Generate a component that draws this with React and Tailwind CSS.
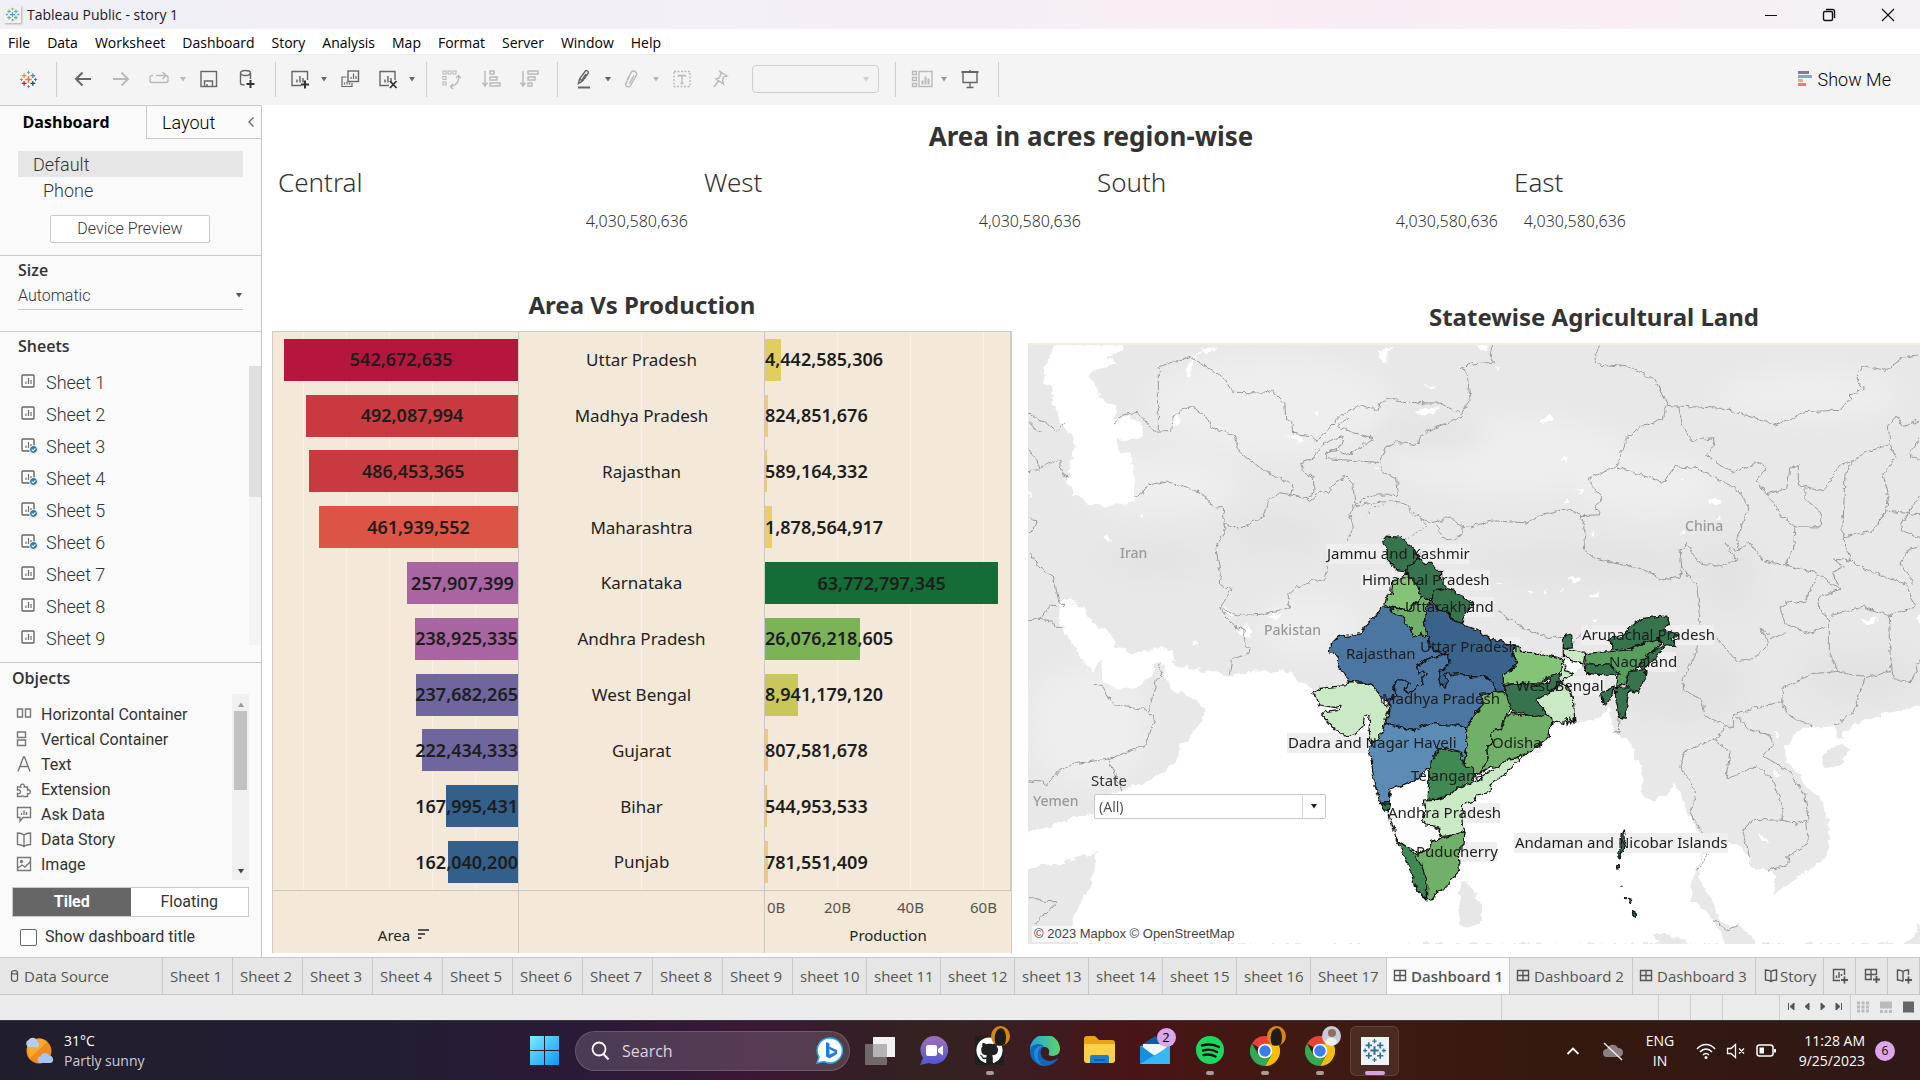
import React from 'react';
import { FaGithub } from 'react-icons/fa';

const UI = "font-['Open_Sans',sans-serif]";
const TB = "font-['Noto_Sans',sans-serif]";

/* ---------- shared small pieces ---------- */

function Svg({ w = 24, h = 24, box, className = '', children }) {
  return (
    <svg width={w} height={h} viewBox={box || `0 0 ${w} ${h}`} fill="none" stroke="currentColor" strokeWidth="1.4" className={`shrink-0 ${className}`} aria-hidden="true">
      {children}
    </svg>
  );
}

function Caret({ className = '' }) {
  return (
    <svg width="8" height="5" viewBox="0 0 8 5" className={`shrink-0 ${className}`} aria-hidden="true">
      <path d="M1 0h6L4 4.500z" fill="currentColor" />
    </svg>
  );
}

const LOGO_MARKS = [
  [12, 12, 4, 2], [12, 3, 2, 1.2], [12, 21, 2, 1.2], [3, 12, 2, 1.2], [21, 12, 2, 1.2],
  [6.500, 7, 3, 1.6], [17.500, 7, 3, 1.6], [6.500, 17, 3, 1.6], [17.500, 17, 3, 1.6],
];
const BRAND = ['#e8762d', '#7099a6', '#7b848f', '#7099a6', '#5b6591', '#eb912c', '#59879b', '#c72035', '#1f447e'];

function TableauMark({ size, mono }) {
  return (
    <svg width={size} height={size} viewBox="0 0 24 24" fill="none" aria-hidden="true">
      {LOGO_MARKS.map(([x, y, r, s], i) => (
        <path key={i} d={`M${x - r} ${y}h${r * 2}M${x} ${y - r}v${r * 2}`} stroke={mono || BRAND[i]} strokeWidth={s} />
      ))}
    </svg>
  );
}

/* ---------- window chrome ---------- */

function TitleBar() {
  return (
    <header className={`flex h-[29px] shrink-0 items-center bg-linear-to-r from-[#f1f0f7] via-[#f9edf6] via-80% to-[#f5f1f7] pl-1 text-[#1a1a1a] ${UI}`}>
      <span className="grid size-[17px] place-items-center bg-[#f3f1ea] shadow-[1px_1px_2px_#aaa]">
        <TableauMark size={15} mono="#5b9cc4" />
      </span>
      <h1 className="ml-1.5 text-[14px]">Tableau Public - story 1</h1>
      <div className="ml-auto flex items-center">
        <button aria-label="Minimize" className="grid h-7 w-[58px] place-items-center">
          <Svg w={12} h={12}><path d="M0 6.500h12" stroke="#111" strokeWidth="1" /></Svg>
        </button>
        <button aria-label="Restore" className="grid h-7 w-[58px] place-items-center">
          <Svg w={14} h={14}><rect x="1.500" y="3.500" width="9" height="9" rx="1.500" stroke="#111" /><path d="M4 1.500h6.500a2 2 0 0 1 2 2V10" stroke="#111" /></Svg>
        </button>
        <button aria-label="Close" className="mr-0.5 grid h-7 w-[60px] place-items-center">
          <Svg w={14} h={14}><path d="M1 1l12 12M13 1L1 13" stroke="#111" strokeWidth="1.200" /></Svg>
        </button>
      </div>
    </header>
  );
}

const MENU = ['File', 'Data', 'Worksheet', 'Dashboard', 'Story', 'Analysis', 'Map', 'Format', 'Server', 'Window', 'Help'];

function MenuBar() {
  return (
    <nav className={`flex h-[25px] shrink-0 items-center gap-[17px] bg-white pt-0.5 pl-2 text-[14px] text-black ${UI}`}>
      {MENU.map((m) => <button key={m} className="leading-5">{m}</button>)}
    </nav>
  );
}

function Sep({ className = '' }) {
  return <span className={`h-[35px] w-px shrink-0 bg-[#cfcfcf] ${className}`} />;
}

function Tool({ label, dim, className = '', children }) {
  return (
    <button aria-label={label} className={`grid size-6 shrink-0 place-items-center ${dim ? 'text-[#b9b9b9]' : 'text-[#666]'} ${className}`}>
      {children}
    </button>
  );
}

const chartBars = <path d="M7 13.500v-3M10 13.500V7M13 13.500V9" strokeWidth="1.500" />;

function Toolbar() {
  return (
    <div className={`flex h-[51px] shrink-0 items-center border-t border-[#ebebeb] bg-[#f4f4f4] pb-0.5 ${TB}`}>
      <Tool label="Start page" className="ml-4"><TableauMark size={19} /></Tool>
      <Sep className="ml-4" />
      <Tool label="Undo" className="ml-3.5"><Svg w={20} h={20}><path d="M18 10H3M9.500 3.500L3 10l6.500 6.500" strokeWidth="2" /></Svg></Tool>
      <Tool label="Redo" dim className="ml-3.5"><Svg w={20} h={20}><path d="M2 10h15M10.500 3.500L17 10l-6.500 6.500" strokeWidth="1.800" /></Svg></Tool>
      <Tool label="Replay" dim className="ml-3.5"><Svg w={20} h={20}><path d="M4 6.500H3a2 2 0 0 0-2 2v3a2 2 0 0 0 2 2h14a2 2 0 0 0 2-2v-3a2 2 0 0 0-2-2H7M13.500 3l3.500 3.500-3.500 3.500" /></Svg></Tool>
      <Caret className="ml-2 text-[#b9b9b9]" />
      <Tool label="Save" className="ml-2.5"><Svg w={20} h={20}><rect x="2" y="2.500" width="15.500" height="15" /><path d="M5.500 17.500V12h8v5.500M8 17.500V15" /></Svg></Tool>
      <Tool label="New data source" className="ml-3.5"><Svg w={20} h={20}><ellipse cx="8.500" cy="4" rx="5" ry="2.500" /><path d="M3.500 4v10c0 1.200 1.500 2 4 2M13.500 4v6" /><path d="M9.500 15h8M13.500 11v8" stroke="#333" strokeWidth="2" /></Svg></Tool>
      <Sep className="ml-4" />
      <Tool label="New worksheet" className="ml-3"><Svg w={20} h={20}><path d="M11 16.500H2v-14h15.500V11" />{chartBars}<path d="M11 15.500h8M15 11.500v8" stroke="#333" strokeWidth="2" /></Svg></Tool>
      <Caret className="ml-2 text-[#666]" />
      <Tool label="Duplicate" className="ml-2.5"><Svg w={20} h={20}><rect x="8" y="2" width="10.500" height="10.500" /><path d="M6.500 8H2v9.500h10V14M11 10V8M13.500 10V4.500M16 10V7M4.500 15.500v-2M7 15.500v-3M9.500 15.500v-2" strokeWidth="1.200" /></Svg></Tool>
      <Tool label="Clear sheet" className="ml-3.5"><Svg w={20} h={20}><path d="M11 16.500H2v-14h15V11" />{chartBars}<path d="M12 12l6.500 7M18.500 12L12 19" stroke="#333" strokeWidth="1.800" /></Svg></Tool>
      <Caret className="ml-2 text-[#666]" />
      <Sep className="ml-2.5" />
      <Tool label="Swap rows and columns" dim className="ml-3"><Svg w={20} h={20}><path d="M2 2h3v3H2zM7 2h3v3H7zM12 2h3v3h-3zM2 7.500h3v3H2zM2 13h3v3H2z" strokeWidth="1.100" /><path d="M17.500 7c1 6-3 10-8 10.500M15 9l2.500-2.500L20 9M12 15l-2.500 2.500L12 20" /></Svg></Tool>
      <Tool label="Sort ascending" dim className="ml-4"><Svg w={20} h={20}><path d="M4 2v14M1.500 13.500L4 17l2.500-3.500M9 2h4v3H9zM9 8h7v3H9zM9 14h10v3H9z" /></Svg></Tool>
      <Tool label="Sort descending" dim className="ml-3.5"><Svg w={20} h={20}><path d="M4 2v14M1.500 13.500L4 17l2.500-3.500M9 2h10v3H9zM9 8h7v3H9zM9 14h4v3H9z" /></Svg></Tool>
      <Sep className="ml-4" />
      <Tool label="Highlight" className="ml-3.5"><Svg w={20} h={20}><path d="M4.500 14.500l1-4.500L11 2.500a1.800 1.800 0 0 1 3 2L8.500 12zM5.500 10l3 2M12 5l-4 6" /><path d="M4 18.500h12" strokeWidth="2" /></Svg></Tool>
      <Caret className="ml-2 text-[#666]" />
      <Tool label="Group members" dim className="ml-2"><Svg w={20} h={20}><path d="M7 8.500L4 14a2.500 2.500 0 0 0 4.500 2.500l6-10.500a3 3 0 0 0-5-3L5 11M12 6.500l-4.500 8" /></Svg></Tool>
      <Caret className="ml-2 text-[#b9b9b9]" />
      <Tool label="Show mark labels" dim className="ml-2.5"><Svg w={20} h={20}><rect x="2" y="2.500" width="16" height="15" strokeDasharray="2 1.500" /><path d="M6.500 8V6.500h7V8M10 6.500v8M8.500 14.500h3" /></Svg></Tool>
      <Tool label="Fix axes" dim className="ml-3.5"><Svg w={20} h={20}><path d="M10 2.500l7 4.500-3 .5-1.500 4 1 3.500-7.500-5 3-1 2-4zM8.500 12L4 18" /></Svg></Tool>
      <label className="ml-5 flex h-7 w-[127px] shrink-0 items-center rounded-sm border border-[#cfcfcf]">
        <select aria-label="Fit" className="h-full w-full appearance-none bg-transparent"><option /></select>
        <Caret className="mr-2 text-[#cfcfcf]" />
      </label>
      <Sep className="ml-4" />
      <Tool label="Show/Hide cards" dim className="ml-3.5"><Svg w={22} h={20}><path d="M1.500 2.500h4v3h-4zM1.500 8.500h4v3h-4zM1.500 14.500h4v3h-4zM8 2.500h13v15H8z" /><path d="M11.500 15.500v-4M14.500 15.500v-8M17.500 15.500v-6" strokeWidth="2" /></Svg></Tool>
      <Caret className="ml-1.5 text-[#999]" />
      <Tool label="Presentation mode" className="ml-2.5"><Svg w={20} h={20}><path d="M1.500 3h17" strokeWidth="2" /><path d="M3 4v9.500h14V4M10 13.500V18M6.500 18.500h7M10 1v2" /></Svg></Tool>
      <Sep className="ml-4" />
      <button className="mr-[29px] ml-auto flex items-center gap-1.5 font-['Roboto',sans-serif] text-[18px] font-light text-black">
        <svg width="14" height="16" viewBox="0 0 14 16" aria-hidden="true">
          <path fill="#8a739b" d="M0 0h11v3H0z" /><path fill="#7fa5d0" d="M0 4h14v3H0z" /><path fill="#f3a97c" d="M0 8h5v3H0z" /><path fill="#f47583" d="M0 12h8v3H0z" />
        </svg>
        Show Me
      </button>
    </div>
  );
}

/* ---------- left panel ---------- */

const OBJECTS = [
  ['Horizontal Container', <path d="M1.500 3h5v8h-5zM9.500 3h5v8h-5z" />],
  ['Vertical Container', <path d="M1.500 1h8v5.500h-8zM1.500 9h8v5.500h-8z" />],
  ['Text', <path d="M2 15.500L7.500 1h1L14 15.500M4 10.500h8" />],
  ['Extension', <path d="M1.500 6h3.200a2 2 0 1 1 3.600 0h3.200v3a2 2 0 1 1 0 3.600v2.900h-4a1.500 1.500 0 0 0-2.500 0H1.500v-3a2 2 0 1 0 0-3.500z" />],
  ['Ask Data', <path d="M1.500 1.500h13v10H7L4 15v-3.500H1.500zM5.500 9V7M8 9V4.500M10.500 9V6" />],
  ['Data Story', <path d="M1.500 2c2 0 5 .5 6.500 2 1.500-1.500 4.500-2 6.500-2v11.500c-2 0-5 .5-6.500 2-1.500-1.500-4.500-2-6.500-2zM8 4v11" />],
  ['Image', <><path d="M1.500 1.500h13v13h-13zM2 12l4-3 3 2 5-5" /><circle cx="5.500" cy="5.500" r="1" /></>],
];

function SheetIcon({ used }) {
  return (
    <Svg w={17} h={16} className="text-[#666]">
      <rect x="1" y="1" width="12" height="12" rx="1" />
      <path d="M5 10V7.500M7.500 10V4M10 10V6" strokeWidth="1.100" />
      {used && <><circle cx="12.500" cy="11.500" r="4" fill="#2f7ea3" stroke="#fafafa" strokeWidth="1" /><path d="M10.700 11.500l1.400 1.300 2.300-2.500" stroke="#fff" strokeWidth="1.100" /></>}
    </Svg>
  );
}

function SidePanel() {
  return (
    <aside className="flex w-[262px] shrink-0 flex-col border-t border-r border-[#c9c9c9] bg-[#fafafa] font-['Open_Sans',sans-serif] text-[#333]">
      <div className="flex h-[33px] shrink-0">
        <button className="w-[146px] shrink-0 pr-3.5 pb-0.5 text-[16px] font-bold text-black">Dashboard</button>
        <div className="flex flex-1 items-center border-b border-l border-[#c9c9c9] pl-[15px] text-black">
          <button className="font-['Roboto',sans-serif] text-[18px] font-light">Layout</button>
          <button aria-label="Collapse pane" className="mr-1.5 ml-auto text-[#666]">
            <Svg w={8} h={12}><path d="M6.500 1.500L2 6l4.500 4.500" /></Svg>
          </button>
        </div>
      </div>
      <div className="flex shrink-0 flex-col px-[18px] pt-3 pb-3 font-['Roboto',sans-serif] font-light">
        <button className="h-[26px] bg-[#e6e6e6] pl-[15px] text-left text-[18px]">Default</button>
        <button className="h-[26px] pl-[25px] text-left text-[18px]">Phone</button>
        <button className="mt-3 h-7 w-40 rounded-xs border border-[#c9c9c9] bg-white text-[16px] ml-8">Device Preview</button>
      </div>
      <div className="h-[76px] shrink-0 border-t border-[#c9c9c9] px-[18px]">
        <h2 className="pt-0.5 text-[16px] leading-6 font-semibold">Size</h2>
        <label className="flex h-7 items-center border-b border-[#c9c9c9]">
          <select aria-label="Size" className="w-full appearance-none font-['Roboto',sans-serif] text-[16px] font-light"><option>Automatic</option></select>
          <Caret className="text-[#555]" />
        </label>
      </div>
      <div className="shrink-0 border-t border-[#c9c9c9]">
        <h2 className="pl-[18px] text-[16px] leading-7 font-semibold">Sheets</h2>
        <div className="mt-1.5 flex">
          <ul className="flex-1 font-['Roboto',sans-serif] text-[18px] font-light">
            {[1, 2, 3, 4, 5, 6, 7, 8, 9].map((n) => (
              <li key={n} className="flex h-8 items-center gap-2 pl-[21px]">
                <SheetIcon used={n >= 3 && n <= 6} />Sheet {n}
              </li>
            ))}
          </ul>
          <div className="h-[279px] w-3 bg-[#f4f4f4]"><div className="h-[131px] bg-[#e0e0e0]" /></div>
        </div>
      </div>
      <div className="mt-2 flex min-h-0 flex-1 flex-col border-t border-[#c9c9c9] px-3">
        <h2 className="text-[16px] leading-[31px] font-semibold">Objects</h2>
        <div className="flex h-[186px]">
          <ul className="flex-1 pt-2 font-['Roboto',sans-serif] text-[16px]">
            {OBJECTS.map(([name, icon]) => (
              <li key={name} className="flex h-[25px] items-center gap-2 pl-1">
                <Svg w={17} h={17} className="text-[#777]">{icon}</Svg>{name}
              </li>
            ))}
          </ul>
          <div className="flex w-[17px] flex-col items-center bg-[#f0f0f0] py-1.5">
            <Caret className="my-0.5 rotate-180 text-[#999]" />
            <div className="mt-0.5 h-[79px] w-[13px] bg-[#c1c1c1]" />
            <Caret className="mt-auto text-[#444]" />
          </div>
        </div>
        <div className="mt-[7px] grid h-[30px] shrink-0 grid-cols-2 border border-[#c9c9c9] font-['Roboto',sans-serif] text-[16px]">
          <button className="bg-[#666] font-bold text-white">Tiled</button>
          <button className="bg-white">Floating</button>
        </div>
        <label className="mt-2 flex items-center gap-2 pl-2 font-['Roboto',sans-serif] text-[16px]">
          <input type="checkbox" className="size-[17px] appearance-none rounded-xs border border-[#666] bg-white" />
          Show dashboard title
        </label>
      </div>
    </aside>
  );
}

/* ---------- dashboard ---------- */

const TOTAL = '4,030,580,636';

function RegionTable() {
  return (
    <section className="shrink-0 pt-3.5">
      <h2 className="text-center text-[26px] leading-[34px] font-bold text-[#333]">Area in acres region-wise</h2>
      <div className="mt-2 grid grid-cols-[426fr_393fr_417fr_412fr] pl-2.5 text-[#333]">
        {['Central', 'West', 'South', 'East'].map((r) => (
          <div key={r} className="px-1.5">
            <h3 className="text-[26px] leading-[42px] font-light">{r}</h3>
            <p className={r === 'East' ? 'w-28 pt-1.5 text-right text-[16px] leading-6 font-light' : 'pt-1.5 pr-1 text-right text-[16px] leading-6 font-light'}>{TOTAL}</p>
          </div>
        ))}
      </div>
    </section>
  );
}

const ROWS = [
  ['Uttar Pradesh', 542672635, '#b6163d', 4442585306, '#e2cd62'],
  ['Madhya Pradesh', 492087994, '#c83a40', 824851676, '#f1cb63'],
  ['Rajasthan', 486453365, '#c83a40', 589164332, '#f1cb63'],
  ['Maharashtra', 461939552, '#dc5445', 1878564917, '#edce60'],
  ['Karnataka', 257907399, '#a865a1', 63772797345, '#146c36'],
  ['Andhra Pradesh', 238925335, '#a865a1', 26076218605, '#7db357'],
  ['West Bengal', 237682265, '#6e669d', 8941179120, '#c9c75c'],
  ['Gujarat', 222434333, '#6e669d', 807581678, '#f1cb63'],
  ['Bihar', 167995431, '#335f8b', 544953533, '#f1cb63'],
  ['Punjab', 162040200, '#335f8b', 781551409, '#f1cb63'],
];
const pct = (v, max) => `${(v / max) * 100}%`;
const fmt = (n) => n.toLocaleString('en-US');
const AREA_MAX = 569000000;
const PROD_MAX = 67000000000;

function BarChart() {
  return (
    <section className="flex w-[740px] shrink-0 flex-col">
      <h2 className="mt-[31px] text-center text-[24px] leading-8 font-bold text-[#333]">Area Vs Production</h2>
      <div className="mt-2.5 mb-1 grid min-h-0 flex-1 grid-cols-3 grid-rows-[1fr_63px] divide-x divide-[#c9c9c9] border border-b-0 border-[#d0cdc8] bg-[#f4e9d8] text-[17px] text-[#222]">
        <div className="grid grid-rows-10 bg-[repeating-linear-gradient(to_left,transparent_0_42px,#f7f1e7_42px_43px)]">
          {ROWS.map(([s, a, c]) => (
            <div key={s} className="grid items-center justify-items-end">
              <div className="col-start-1 row-start-1 h-[42px]" style={{ width: pct(a, AREA_MAX), background: c }} />
              <div className="col-start-1 row-start-1 min-w-max text-center text-[18px] font-semibold text-[#1d1d1d]" style={{ width: pct(a, AREA_MAX) }}>{fmt(a)}</div>
            </div>
          ))}
        </div>
        <div className="grid grid-rows-10 bg-[linear-gradient(#f7f1e7,#f7f1e7)] bg-[length:1px_100%] bg-center bg-no-repeat">
          {ROWS.map(([s]) => <div key={s} className="grid place-items-center">{s}</div>)}
        </div>
        <div className="grid grid-rows-10 bg-[repeating-linear-gradient(to_right,transparent_0_72px,#f7f1e7_72px_73px)]">
          {ROWS.map(([s, , , p, c]) => (
            <div key={s} className="grid items-center justify-items-start">
              <div className="col-start-1 row-start-1 h-[42px] min-w-0.5" style={{ width: pct(p, PROD_MAX), background: c }} />
              <div className="col-start-1 row-start-1 min-w-max text-center text-[18px] font-semibold text-[#1d1d1d]" style={{ width: pct(p, PROD_MAX) }}>{fmt(p)}</div>
            </div>
          ))}
        </div>
        <div className="flex items-end justify-center gap-2 border-t border-[#c9c9c9] pb-1.5 pl-4 text-[15px]">
          <span className="leading-6">Area</span>
          <Svg w={11} h={10} className="mb-2 text-[#555]"><path d="M0 1h11M0 5h7M0 9h3.500" strokeWidth="1.800" /></Svg>
        </div>
        <div className="border-t border-[#c9c9c9]" />
        <div className="flex min-w-0 flex-col border-t border-[#c9c9c9] text-[15px]">
          <div className="flex pt-1 leading-6 text-[#555]">
            <span className="w-9 shrink-0 pl-0.5">0B</span>
            {['20B', '40B', '60B'].map((t) => <span key={t} className="w-[73px] shrink-0 text-center">{t}</span>)}
          </div>
          <span className="mt-auto pb-1.5 text-center leading-6">Production</span>
        </div>
      </div>
    </section>
  );
}

/* ---------- map ---------- */

const SEA_WEST = [
  'M110 36L90 60 70 95 75 130 100 150 95 185 110 215 135 240 160 270 165 290 150 330 145 380 165 410 200 432 260 440 310 432 342 430V330L325 305 295 300 293 270 330 270 360 275 370 250 345 225 310 215 285 225V195L240 165 235 140 205 115 230 95 290 85 265 65 310 50V36z',
  'M120 680L150 670 190 690 225 730 270 755 290 790 330 805 370 800 425 792 455 800 460 830 520 845 625 858 700 850 800 848 820 860 850 885 880 895 1000 900 1060 960H1352V1528H153L155 1470 200 1400 225 1340 232 1300 200 1305 130 1325 60 1335 20 1340V1250L100 1235 150 1215 220 1200 260 1160 300 1145 380 1125 430 1100 475 1065 485 1030 520 1010 557 955 530 920 470 900 430 865 425 830 410 830 395 865 350 890 300 895 260 880 245 870V820L225 830 220 860 190 820 150 775 120 740 115 700z',
  'M500 115L505 80 525 60 555 50 520 75 512 112zM540 45L595 42 560 60zM1075 50L1120 38 1100 60 1098 85 1080 65zM455 240L470 215 488 225 470 240zM1180 205L1220 195 1255 192 1240 208 1210 215zM790 262L830 262 855 275 830 278zM1215 140L1250 142 1230 150zM247 520L262 512 270 525 255 530zM355 465L375 465 365 470zM655 745L690 735 690 765 675 765zM515 775L530 770 535 785 520 785zM605 692L650 705 640 710 608 700zM745 715L785 705 770 720zM880 205L892 203 888 212zM1068 342L1078 338 1076 348zM27 400L36 408 28 415z',
];
const SEA_EAST = [
  'M0 1000L230 980 315 978 380 968 420 945 432 1000 480 1030 495 1060 520 1110 510 1160 560 1172 600 1150 612 1128 640 1170 660 1215 690 1250 700 1290 685 1330 665 1370 668 1420 700 1440 730 1470 770 1528H0z',
  'M858 1528L840 1500 790 1480 740 1465 735 1430 700 1390 690 1355 695 1310 715 1300 760 1272 800 1280 835 1310 850 1335 890 1345 915 1350 910 1400 960 1380 1000 1350 1050 1325 1078 1290 1075 1220 1060 1180 1030 1150 990 1110 950 1075 945 1040 980 1000 1010 985 1060 990 1095 985 1100 1015 1115 1022 1120 1000 1180 975 1240 955 1300 945 1360 935V1528z',
  'M210 225L240 212 255 222 225 232zM270 325L292 318 290 328zM315 402L345 402 335 410zM715 425L735 415 755 430 735 442zM735 468L760 460 750 472zM630 372L645 370 640 376zM360 508L378 506 370 514zM290 620L310 610 328 620 312 630zM270 655L285 640 285 652zM222 655L235 640 230 658zM175 655L195 652 190 660zM358 662L388 655 380 668 365 668zM80 628L100 632 85 635zM280 430L298 422 295 432zM620 502L650 500 640 508zM365 722L385 720 378 730zM1170 715L1195 725 1225 710 1220 730 1190 735zM1340 715L1352 712 1352 735zM20 36L50 36 45 55 30 50zM70 85L92 98 88 104zM865 1255L890 1265 895 1278 875 1270zM900 1000L935 1010 925 1018zM905 1090L935 1110 920 1112zM265 832L285 815 310 820 345 832 335 845 300 848z',
];
const ISLES = 'M1055 1060L1080 1038 1130 1035 1142 1045 1110 1085 1070 1090 1058 1080zM550 1500L580 1502 640 1515 655 1530H570zM1310 1528L1340 1490 1352 1475V1528z';
const LANKA = 'M508 1110L530 1115 550 1140 575 1180 580 1220 560 1245 530 1252 512 1240 505 1200 508 1150 515 1125z';
const BORDERS_WEST = 'M415 250V92L510 66 605 115 640 155 735 157 755 150 795 185 797 222 815 228 818 257 870 263 890 278 960 215 1010 188 1075 200 1080 182 1105 170 1150 180 1260 182 1325 210 1350 170 1340 100 1320 95 1350 85M282 232L310 212 345 205 370 220 400 252 455 250 460 215 485 200 515 190 560 215 575 245 640 260 660 305 720 345 818 385 812 410M337 412L365 408 385 385 440 376 505 395 545 405 580 440 610 440 612 480 655 495 685 485 735 460 745 425 780 405 812 410 860 420 870 425 905 402 925 405 945 380 980 365 998 380 1005 435 1055 410 1135 412 1130 370 1090 355 1080 330 1000 325 915 320 918 305 950 300 990 310 1020 290 1062 270 1000 255 950 240 990 215M845 330L880 320 890 300 930 275 970 265 960 290 918 305M845 330L850 350 880 365 882 400 862 420M1080 330L1095 295 1130 280 1195 285 1200 265 1240 245 1328 215M1005 435L990 460 1000 490 985 525M1005 440L1050 432 1120 425 1160 435 1180 460 1230 480 1260 475 1290 465 1325 490 1350 487M1250 485L1265 515 1300 525 1325 510 1330 490M612 480L615 500 587 540 600 600 602 635 635 645 600 692 655 710 720 708 805 692 805 660 830 640 880 622 915 625 925 585M600 692L640 735 672 745 675 785 690 790 687 805 635 820 628 858M27 555L60 590 100 615 115 670 135 690M27 720H60L90 687 115 690M60 720L100 725 105 740H130M220 880L245 885 285 935 385 945 403 970 378 1033 265 1068 155 1080 115 1100 80 1135 65 1125 27 1122M265 1068L305 1145M385 945L400 905 410 870 425 860 420 830M27 205L55 225 80 230 110 252 135 228M27 350L55 348 80 335 120 320 120 340 130 360 147 368M27 295L50 325 60 345M27 230L50 250 65 255M27 1410L72 1422 110 1423 45 1480M27 470L48 475 38 500 27 505';
const BORDERS_EAST = 'M388 36L375 70 385 85 480 92 555 125 592 188 760 195 830 213 915 237 1005 203 1110 200 1150 160 1180 145 1160 120 1175 88 1245 100 1300 70 1352 60M0 85L70 80 60 60 68 36M590 188L580 220 510 240 465 275 440 340 355 370 370 395 395 415 378 440 390 460 330 462 290 445 210 460 170 480 70 475 0 490M330 462L345 500 340 545 375 570 520 595 580 622 630 615 635 590 630 545 650 532 690 580 760 590 800 570 762 530 800 550 840 530 880 575 945 585 1040 605 1110 645 1045 665 1050 700 1078 720V800L1100 850 1030 855M440 340L490 355 580 378 615 340 680 345 800 395 835 440 800 520 810 550M622 190L640 240 665 275 730 268 735 290 710 310 790 355 870 328 885 345 860 375 890 407 950 395 960 345 985 335 985 385 1060 400 1110 335 1150 325 1185 305 1260 285 1255 240 1280 215 1300 240 1350 225M890 407L930 460 975 490 1050 490 1055 455 1005 420 1005 390M975 490L970 550 945 585M1150 325L1125 360 1118 515 1145 575 1200 600 1310 635 1335 690 1255 710 1180 690 1085 710M1260 285L1275 320 1240 360 1255 410 1245 450 1350 460M1245 450L1210 500 1118 515M1350 410L1310 460 1290 495 1350 520M1350 270L1315 310 1350 325M1350 540L1320 545 1290 580 1330 630M1145 575L1090 570 1120 590 1085 600 1110 645M635 590L680 640 690 700 680 800 640 870 640 895 695 920 705 960 770 985 790 990 790 955 880 935 935 925 960 960 1010 980 1030 985M1255 710L1260 800 1270 870 1325 875 1350 820M1185 865L1150 950 1095 985M1030 855L940 890 935 925M1100 850L1185 865 1265 850M1045 610L1000 680 960 675 930 690 945 730 1010 755 1070 740M900 760L870 740 895 780 850 820 800 825 740 765M900 770L950 750M735 1020L770 985M800 960L830 990 900 1010 910 1030 880 1060 960 1100 1005 1160 1015 1220M735 1020L650 1045 630 1085 680 1155 660 1200 695 1250M735 1020L780 1050 768 1115 820 1100 860 1085 910 1120 940 1190 935 1220 850 1218 818 1245 835 1310M935 1220L980 1228 1010 1220 1015 1280 950 1310 955 1330 895 1345M715 1305L682 1345M732 1467L770 1495 805 1480M85 700L110 715 170 745 230 765 280 765M310 780L335 755M450 965L448 1000 432 1000';

const DARK = '#35744d';
const STATES = [
  [DARK, '278 92 290 78 333 82 352 100 372 118 390 140 370 160 357 170 350 186 325 183 305 165 292 150 295 125 280 105'],
  [DARK, '350 186 357 165 385 148 405 160 425 160 440 180 455 182 455 205 468 235 440 238 428 270 405 268 390 255 380 225 355 200'],
  ['#84c477', '350 190 380 225 392 255 400 268 375 280 358 300 325 295 300 290 282 285 285 265 305 250 308 215 335 200'],
  ['#70b068', '305 293 325 296 355 303 375 283 395 260 420 272 408 290 403 340 417 375 410 385 395 370 368 378 358 350 345 335 340 320 310 310'],
  [DARK, '428 245 455 235 480 240 510 255 550 280 530 310 515 340 490 330 470 305 440 300 428 275'],
  ['#4b76a2', '275 290 305 293 310 310 340 320 345 335 358 350 368 378 395 370 415 382 418 410 440 425 460 430 440 440 400 455 380 470 385 485 412 488 410 495 395 500 400 525 385 528 370 540 350 552 345 535 358 520 340 510 320 510 312 530 318 560 290 570 270 555 250 530 220 517 175 515 160 480 140 470 145 440 118 425 120 405 150 375 165 380 215 370 225 345 255 320'],
  ['#4b76a2', '460 430 480 440 480 460 455 480 510 490 540 500 580 500 612 520 618 548 575 550 580 585 555 605 540 635 530 655 500 645 470 645 420 640 390 650 375 662 345 655 310 648 285 640 300 600 290 570 318 560 312 530 320 510 340 510 358 520 345 535 350 552 370 540 385 528 400 525 395 500 410 495 412 488 385 485 380 470 400 455 440 440'],
  ['#3a638c', '408 290 428 275 440 300 470 305 490 330 520 345 560 360 600 385 650 400 680 410 665 440 685 465 640 495 642 540 620 550 612 520 580 500 540 500 510 490 480 495 468 488 462 495 473 510 465 533 450 525 445 500 455 480 480 460 475 435 445 425 420 410 415 380 403 340'],
  ['#c9eac4', '65 552 90 535 130 530 170 527 178 515 220 517 250 530 270 555 280 580 300 592 290 620 282 650 265 690 245 700 237 660 240 618 225 615 218 650 195 670 165 678 130 655 95 615 105 605 150 598 153 588 130 592 90 585 80 562'],
  ['#5b8cb5', '285 640 310 648 345 655 375 662 390 650 420 640 470 645 500 645 530 655 537 690 528 720 522 762 510 725 470 715 450 718 440 745 425 765 405 785 385 810 350 820 300 840 298 878 272 880 255 830 245 760 235 710 265 690 280 655'],
  ['#fdfdfd', '300 840 350 820 385 805 410 775 420 790 415 868 402 872 405 905 395 930 445 955 455 985 425 995 420 1015 385 1030 350 1010 320 990 310 955 295 910 298 878'],
  ['#70b068', '575 550 640 545 668 590 645 620 630 655 605 665 605 705 590 710 595 750 575 785 555 792 550 775 522 762 530 725 530 655 545 625 580 585'],
  ['#70b068', '668 610 735 622 770 610 792 632 775 655 775 685 740 710 690 742 650 750 625 770 600 772 570 790 595 750 590 712 605 705 605 665 635 655 645 620'],
  ['#84c477', '675 405 700 430 750 430 815 445 822 460 805 490 780 500 750 522 700 520 640 523 640 495 685 465 670 440'],
  ['#c9eac4', '812 515 835 500 850 490 830 482 828 470 815 460 812 490 800 540 780 545 735 572 755 590 770 612 792 632 820 640 826 622 832 642 838 624 845 642 850 626 855 640 850 570 835 530'],
  [DARK, '640 525 700 520 750 525 780 515 785 495 805 490 812 515 800 530 780 545 735 572 755 590 770 612 735 622 700 610 668 605 650 560'],
  ['#c9eac4', '820 415 850 422 885 430 880 458 855 455 820 440'],
  [DARK, '820 378 845 372 847 410 820 415'],
  ['#3f8a52', '425 745 450 715 490 725 515 730 520 765 550 775 555 795 540 825 500 835 480 855 445 865 415 868 415 830 420 785'],
  ['#c9eac4', '400 870 445 868 480 855 500 835 555 815 590 790 625 770 650 748 690 742 660 780 600 825 597 848 560 855 550 872 518 885 515 930 525 965 490 975 455 980 445 950 410 945 395 930 405 905'],
  [DARK, '272 880 298 878 293 908'],
  ['#70b068', '525 965 522 1000 505 1030 508 1083 480 1110 470 1130 440 1145 430 1165 410 1170 410 1120 395 1070 375 1035 420 1015 425 995 455 985'],
  ['#3f8a52', '318 990 350 1010 375 1035 395 1065 410 1120 408 1170 380 1140 365 1085 345 1040'],
  ['#579e5f', '885 430 960 425 1020 420 1060 400 1105 385 1115 400 1085 425 1060 450 1040 475 1015 490 1005 520 980 530 985 490 960 465 885 462'],
  [DARK, '950 390 1000 375 1025 345 1060 325 1100 320 1130 318 1138 340 1120 360 1168 375 1145 385 1160 410 1120 402 1105 385 1060 400 1020 415 965 420 965 395'],
  [DARK, '885 465 960 465 990 490 975 497 890 490'],
  [DARK, '1045 465 1085 425 1125 405 1100 440 1070 465 1060 480'],
  [DARK, '1018 488 1068 482 1065 510 1045 547 1005 540'],
  [DARK, '975 533 1018 530 1005 625 988 620 978 570'],
  [DARK, '935 548 972 530 970 550 950 585 938 575'],
  [DARK, '1003 957 1006 980 1000 1015 990 1045 986 1038 994 1000 997 970'],
  [DARK, '980 1067 988 1067 988 1077 980 1077'],
  [DARK, '1016 1168 1026 1172 1020 1180'],
  [DARK, '1027 1202 1037 1206 1040 1218 1033 1222 1028 1212'],
  [DARK, '1006 1161 1010 1164 1007 1167'],
  [DARK, '992 1128 996 1129 993 1132'],
];

/* label text, left edge, baseline, width of its halo */
const LABELS = [
  ['Jammu and Kashmir', 299, 214, 144], ['Himachal Pradesh', 334, 240, 129], ['Uttarakhand', 377, 267, 90],
  ['Rajasthan', 318, 314, 0], ['Uttar Pradesh', 392, 307, 101], ['Madhya Pradesh', 354, 359, 118],
  ['West Bengal', 488, 346, 90], ['Dadra and Nagar Haveli', 260, 403, 167], ['Odisha', 464, 403, 50],
  ['Telangana', 383, 436, 0], ['Andhra Pradesh', 360, 473, 113], ['Puducherry', 388, 512, 82],
  ['Arunachal Pradesh', 554, 295, 133], ['Nagaland', 581, 322, 68], ['Andaman and Nicobar Islands', 487, 503, 214],
];

function IndiaMap() {
  const line = { vectorEffect: 'non-scaling-stroke' };
  return (
    <svg viewBox="0 0 892 600" preserveAspectRatio="xMinYMin slice" className="block h-full w-full" role="img" aria-label="Map of Indian states">
      <defs>
        <filter id="coast" x="0" y="0" width="100%" height="100%" filterUnits="userSpaceOnUse" colorInterpolationFilters="sRGB">
          <feTurbulence type="fractalNoise" baseFrequency="0.12" numOctaves="3" seed="4" />
          <feDisplacementMap in="SourceGraphic" scale="9" xChannelSelector="R" yChannelSelector="G" />
        </filter>
        <filter id="edge" x="0" y="0" width="100%" height="100%" filterUnits="userSpaceOnUse" colorInterpolationFilters="sRGB">
          <feTurbulence type="fractalNoise" baseFrequency="0.17" numOctaves="2" seed="9" />
          <feDisplacementMap in="SourceGraphic" scale="6" xChannelSelector="R" yChannelSelector="G" />
        </filter>
        <filter id="soft"><feGaussianBlur stdDeviation="12" /></filter>
      </defs>
      <rect width="892" height="600" fill="#e8e8e8" />
      <g filter="url(#soft)">
        <g fill="#eeeeee">
          <ellipse cx="240" cy="60" rx="120" ry="50" /><ellipse cx="130" cy="140" rx="80" ry="30" /><ellipse cx="60" cy="380" rx="60" ry="60" />
          <ellipse cx="480" cy="110" rx="120" ry="40" /><ellipse cx="620" cy="140" rx="70" ry="30" /><ellipse cx="780" cy="50" rx="90" ry="25" /><ellipse cx="280" cy="280" rx="50" ry="30" />
        </g>
        <g fill="#e3e3e3">
          <ellipse cx="400" cy="90" rx="60" ry="15" /><ellipse cx="130" cy="215" rx="60" ry="15" /><ellipse cx="250" cy="190" rx="50" ry="20" />
          <ellipse cx="560" cy="220" rx="120" ry="20" /><ellipse cx="700" cy="230" rx="30" ry="40" /><ellipse cx="650" cy="340" rx="70" ry="40" /><ellipse cx="830" cy="330" rx="60" ry="30" />
        </g>
      </g>
      <g filter="url(#coast)">
        <g transform="translate(-8 -15) scale(.33333 .4018)">{SEA_WEST.map((d) => <path key={d} d={d} fill="#fff" />)}</g>
        <g transform="translate(442 -15) scale(.33333 .4018)">
          {SEA_EAST.map((d) => <path key={d} d={d} fill="#fff" />)}
          <path d={ISLES} fill="#e7e7e7" />
        </g>
        <path d={LANKA} fill="#e7e7e7" transform="translate(262 165) scale(.33333)" />
      </g>
      <g filter="url(#edge)" fill="none" stroke="#989898" strokeWidth="1">
        <path d={BORDERS_WEST} transform="translate(-8 -15) scale(.33333 .4018)" style={line} />
        <path d="M1040 465L1050 445 1090 435M1180 450L1220 490 1155 520 1085 520" transform="translate(-8 -15) scale(.33333 .4018)" style={line} strokeDasharray="2 2" />
        <path d={BORDERS_EAST} transform="translate(442 -15) scale(.33333 .4018)" style={line} />
      </g>
      {LABELS.map(([t, x, y, w]) => w > 0 && <rect key={t} x={x - 1} y={y - 15} width={w} height="20" fill="#efefef" />)}
      <g filter="url(#edge)" stroke="#111" strokeWidth="1.2" strokeLinejoin="round">
        {STATES.map(([fill, pts]) => (
          <polygon key={pts} points={pts} fill={fill} transform="translate(262 165) scale(.33333)" style={line} />
        ))}
      </g>
      <g className={TB}>
        <g fontSize="14" fontWeight="500" fill="#999">
          <text x="92" y="213">Iran</text><text x="236" y="290">Pakistan</text><text x="5" y="461">Yemen</text><text x="657" y="186">China</text>
        </g>
        <g fontSize="15" fill="#1c1c1c">
          {LABELS.map(([t, x, y]) => <text key={t} x={x} y={y}>{t}</text>)}
        </g>
      </g>
    </svg>
  );
}

function MapPanel() {
  return (
    <section className="flex min-w-0 flex-1 flex-col">
      <h2 className="mt-[43px] pl-64 text-center text-[24px] leading-8 font-bold text-[#333]">Statewise Agricultural Land</h2>
      <div className="relative mt-2.5 mb-[13px] ml-4 min-h-0 flex-1 overflow-hidden border-t-2 border-[#f6ecd9]">
        <IndiaMap />
        <div className="absolute top-[423px] left-[63px] flex flex-col text-[#333]">
          <label htmlFor="state" className="text-[15px] leading-6">State</label>
          <div className="mt-0.5 ml-[3px] flex h-[25px] w-[232px] items-center rounded-xs border border-[#c9c9c9] bg-white text-[14px]">
            <select id="state" className="h-full flex-1 appearance-none border-r border-[#d8d8d8] px-1 text-[#555]"><option>(All)</option></select>
            <span className="grid w-[22px] place-items-center"><Caret className="text-[#222]" /></span>
          </div>
        </div>
        <p className="absolute bottom-0.5 left-1 bg-white/60 px-0.5 font-['Liberation_Sans',sans-serif] text-[13px] leading-4 text-[#444]">© 2023 Mapbox © OpenStreetMap</p>
      </div>
    </section>
  );
}

/* ---------- bottom strips ---------- */

function GridIcon({ plus }) {
  return (
    <Svg w={16} h={16}>
      {plus
        ? <><path d="M8 11.500H1.500v-10h11V7M1.500 6.500h11M7 1.500v10" /><path d="M9 11.500h7M12.500 8v7" strokeWidth="1.800" /></>
        : <path d="M1.500 2.500h11v10h-11zM7 2.500v10M1.500 7.500h11" />}
    </Svg>
  );
}
const book = 'M1.500 2c2 0 4 .3 5.500 1.500C8.500 2.300 10.500 2 12.500 2v10c-2 0-4 .3-5.500 1.500C5.500 12.300 3.500 12 1.500 12zM7 3.500v10';

function TabStrip() {
  const tab = 'flex h-full shrink-0 items-center border-r border-[#c9c9c9] whitespace-nowrap';
  return (
    <nav className="flex h-[38px] shrink-0 items-center border-y border-[#c9c9c9] bg-[#e6e6e6] font-['Open_Sans',sans-serif] text-[15px] text-[#555]">
      <button className={`${tab} w-[163px] gap-1 pl-2.5`}>
        <Svg w={10} h={14}><path d="M1.500 3.500v7c0 2.500 6 2.500 6 0v-7c0-2.500-6-2.500-6 0c0 2 6 2 6 0" strokeWidth="1.200" /></Svg>Data Source
      </button>
      {[1, 2, 3, 4, 5, 6, 7, 8, 9].map((n) => <button key={n} className={`${tab} w-[70px] pl-[7px]`}>Sheet {n}</button>)}
      {[10, 11, 12, 13, 14, 15, 16].map((n) => <button key={n} className={`${tab} w-[74px] pl-[7px]`}>sheet {n}</button>)}
      <button className={`${tab} w-[76px] pl-[7px]`}>Sheet 17</button>
      {[1, 2, 3].map((n) => (
        <button key={n} className={`${tab} w-[123px] gap-0.5 pl-1.5 ${n === 1 ? 'bg-[#fafafa] font-semibold' : ''}`}><GridIcon />Dashboard {n}</button>
      ))}
      <button className={`${tab} w-0 min-w-0 flex-1 gap-0.5 pl-2`}><Svg w={14} h={16}><path d={book} /></Svg>Story</button>
      <button aria-label="New worksheet" className={`${tab} w-8 justify-center`}><Svg w={16} h={16}><path d="M8 12.500H1.500v-11h11V7M4.500 10V7.500M7 10V4M9.500 8V6" /><path d="M9 12h7M12.500 8.500v7" strokeWidth="1.800" /></Svg></button>
      <button aria-label="New dashboard" className={`${tab} w-8 justify-center`}><GridIcon plus /></button>
      <button aria-label="New story" className={`${tab} w-8 justify-center`}><Svg w={16} h={16}><path d="M7 13.500C5.500 12.300 3.500 12 1.500 12V2c2 0 4 .3 5.500 1.500C8.500 2.300 10.500 2 12.500 2v5M7 3.500v10" /><path d="M9 12h7M12.500 8.500v7" strokeWidth="1.800" /></Svg></button>
    </nav>
  );
}

function StatusBar() {
  const cell = 'h-full border-l border-[#d0d0d0]';
  return (
    <div className="flex h-[25px] shrink-0 items-center justify-end bg-[#ebebeb] text-[#555]">
      <div className={`${cell} w-[157px]`} /><div className={`${cell} w-8`} /><div className={`${cell} w-8`} /><div className={`${cell} w-[57px]`} />
      <div className={`${cell} flex w-[71px] items-center justify-around px-1 pb-0.5`}>
        {['M1.500 1v7M7 1L3 4.500 7 8z', 'M6 1L2 4.500 6 8z', 'M3 1l4 3.500L3 8z', 'M7.500 1v7M2 1l4 3.500L2 8z'].map((d, i) => (
          <button key={d} aria-label={['First', 'Previous', 'Next', 'Last'][i]}><Svg w={9} h={9}><path d={d} fill="currentColor" strokeWidth="1" /></Svg></button>
        ))}
      </div>
      <div className={`${cell} flex w-[70px] items-center justify-around pb-0.5`}>
        <Svg w={12} h={12} className="text-[#bbb]"><path d="M0 2h12M0 6h12M0 10h12" strokeWidth="3" strokeDasharray="3 1.500" /></Svg>
        <Svg w={12} h={12} className="text-[#bbb]"><path d="M0 4h12" strokeWidth="7" /><path d="M0 10.500h12" strokeWidth="3" strokeDasharray="3 1.500" /></Svg>
        <Svg w={12} h={12} className="text-[#666]"><path d="M0 6h11" strokeWidth="11" /></Svg>
      </div>
    </div>
  );
}

/* ---------- taskbar ---------- */

function Chrome() {
  return (
    <svg width="30" height="30" viewBox="0 0 30 30" aria-hidden="true">
      <path fill="#ea4335" d="M15 15L2 7.500A15 15 0 0 1 28 7.500H15z" />
      <path fill="#fbbc04" d="M28 7.500A15 15 0 0 1 15 30L21.500 18.700 15 7.500z" />
      <path fill="#34a853" d="M2 7.500A15 15 0 0 0 15 30L21.500 18.700H8.500z" />
      <circle cx="15" cy="15" r="7.300" fill="#fff" /><circle cx="15" cy="15" r="5.700" fill="#3b7ded" />
    </svg>
  );
}

function Avatar({ light }) {
  return (
    <svg width="19" height="20" viewBox="0 0 19 20" className="absolute -top-2.5 -right-1.5" aria-hidden="true">
      <ellipse cx="9.500" cy="10" rx="9.500" ry="10" fill={light ? '#c7ccd6' : '#d9870f'} />
      {light
        ? <><circle cx="10" cy="7" r="4" fill="#8f6e60" /><path d="M3 16c2-6 11-6 12 0-3 5-9 5-12 0z" fill="#eceef2" /></>
        : <path d="M5 19C2 12 4 3 10 2c5 1 6 9 4 16-3 2-6 2-9 1z" fill="#201c1a" />}
    </svg>
  );
}

const APPS = [
  ['Task View', null, <svg width="30" height="30" viewBox="0 0 30 30"><path d="M0 8h22v21H0z" fill="#6f6a69" /><path d="M8 1h22v20H8z" fill="#f3f3f3" /><path d="M8 8h14v13H8z" fill="#b6b3b3" /></svg>],
  ['Chat', null, <svg width="29" height="29" viewBox="0 0 29 29"><defs><linearGradient id="chat" x2="0" y2="1"><stop stopColor="#a070b8" /><stop offset="1" stopColor="#4e57d4" /></linearGradient></defs><path d="M15 0a14 14 0 1 1-6 27L0 29l3-7A14 14 0 0 1 15 0z" fill="url(#chat)" /><rect x="6" y="9" width="11" height="11" rx="2" fill="#fff" /><path d="M18 13l5-3.500v10L18 16z" fill="#fff" /></svg>],
  ['GitHub', 'dot', <span className="relative grid h-[29px] w-[29px] place-items-center bg-[#1f1f1f]"><FaGithub size={27} color="#fff" /><Avatar /></span>],
  ['Edge', null, <svg width="30" height="30" viewBox="0 0 30 30"><defs><linearGradient id="e1" x1="0" x2="1"><stop stopColor="#1fa5e0" /><stop offset="1" stopColor="#5fd467" /></linearGradient></defs><path d="M0 14A15 15 0 0 1 30 13c0 5-4 7-8 7-3 0-4-1-3-3 1-3-1-6-5-6-6 0-9 5-14 3z" fill="url(#e1)" /><path d="M0 14C1 8 9 6 14 10c-5 3-5 14 5 15 3 0 6-1 9-3-2 5-8 8-13 8A15 15 0 0 1 0 14z" fill="#1467b8" /><path d="M14 10c-8 1-9 16 0 19.900C9 29 4 24 4 18c0-5 4-9 10-8z" fill="#1b8ddb" /></svg>],
  ['File Explorer', null, <svg width="31" height="28" viewBox="0 0 31 28"><path d="M0 3a3 3 0 0 1 3-3h8l4 4h13a3 3 0 0 1 3 3v18H0z" fill="#e8a317" /><path d="M0 8h31v16a3 3 0 0 1-3 3H3a3 3 0 0 1-3-3z" fill="#fbd04b" /><path d="M6 27v-6a2 2 0 0 1 2-2h15a2 2 0 0 1 2 2v6z" fill="#1b7fd1" /><path d="M10 24h11" stroke="#0d5fa8" strokeWidth="2" /></svg>],
  ['Mail', null, <span className="relative"><svg width="30" height="28" viewBox="0 0 30 28"><path d="M0 10L15 0l15 10z" fill="#0a5ea8" /><path d="M0 10h30v18H0z" fill="#2aa7ec" /><path d="M3 8h24v3L15 21 3 11z" fill="#f1f6fa" /><path d="M0 10l18 12-18 6z" fill="#1490df" /><path d="M30 10L0 28h30z" fill="#35b8f4" /></svg><b className="absolute -top-2 -right-1.5 grid size-[19px] place-items-center rounded-full bg-[#dba6ea] text-[13px] font-normal text-black">2</b></span>],
  ['Spotify', 'dot', <svg width="28" height="28" viewBox="0 0 28 28"><circle cx="14" cy="14" r="14" fill="#1ed760" /><path d="M6 9.500c6-1.800 12-1.200 17 1.500M7 14.500c5-1.500 10-1 14 1.500M7.500 19c4-1 8-.7 12 1.500" stroke="#111" strokeWidth="2.400" strokeLinecap="round" fill="none" /></svg>],
  ['Chrome', 'dot', <span className="relative"><Chrome /><Avatar /></span>],
  ['Chrome profile 2', 'dot', <span className="relative"><Chrome /><Avatar light /></span>],
  ['Tableau', 'active', <span className="grid size-7 place-items-center bg-[#eef3f6]"><TableauMark size={25} mono="#2f7093" /></span>],
];

function Taskbar() {
  return (
    <footer className={`flex h-[60px] shrink-0 items-center border-t border-[#3c3a44] bg-[linear-gradient(90deg,#211e2c_0%,#231d33_20%,#2b1a38_31%,#3a1836_39%,#33221f_48%,#3a1e22_53%,#4a1417_59%,#3f1a12_68%,#35190f_80%,#2f1816_100%)] text-white ${UI}`}>
      <button className="flex w-[513px] items-center gap-2 pl-6 text-left">
        <svg width="32" height="30" viewBox="0 0 32 30" aria-hidden="true">
          <circle cx="15" cy="15" r="12.500" fill="#f08c1e" /><path d="M3 12a12 12 0 0 1 20-6L6 22z" fill="#f6ab2c" />
          <path d="M4 11a4 4 0 0 1 .5-7 5 5 0 0 1 9 1.500 3.500 3.500 0 0 1 0 6z" fill="#b9cdf2" /><path d="M15 27a4 4 0 0 1 1.500-7 5 5 0 0 1 9-.5 4 4 0 0 1 1.500 7.500z" fill="#a9c4f3" />
        </svg>
        <span className="flex flex-col text-[14px] leading-5"><span>31°C</span><span className="text-[#d0ccd4]">Partly sunny</span></span>
      </button>
      <button aria-label="Start" className="grid w-[62px] place-items-center">
        <svg width="29" height="29" viewBox="0 0 29 29" aria-hidden="true"><defs><linearGradient id="w" x2="1" y2="1"><stop stopColor="#7eeaff" /><stop offset="1" stopColor="#0a97f5" /></linearGradient></defs><path d="M0 0h14v14H0zM15 0h14v14H15zM0 15h14v14H0zM15 15h14v14H15z" fill="url(#w)" /></svg>
      </button>
      <label className="flex h-10 w-[275px] shrink-0 items-center rounded-full border border-white/15 bg-white/15 pr-1.5 pl-3.5">
        <Svg w={20} h={20}><circle cx="9" cy="8" r="6.500" strokeWidth="1.800" /><path d="M13.500 13l5 5.500" strokeWidth="2" /></Svg>
        <input placeholder="Search" aria-label="Search" className="ml-3 w-0 flex-1 bg-transparent text-[16px] text-[#e5dfe5] placeholder:text-[#dcd3dc]" />
        <svg width="27" height="27" viewBox="0 0 27 27" aria-hidden="true"><path d="M14 1a12.500 12.500 0 1 1-6 23.500L1 26l2-6A12.500 12.500 0 0 1 14 1z" fill="#fff" stroke="#28a8ea" strokeWidth="1.500" /><path d="M10 5l3.500 1.500v11L19 15l-5-2.500-1-3 8 3.500v4l-7.500 4.500L10 19.500z" fill="#1b7fe0" /></svg>
      </label>
      <div className="ml-0.5 flex">
        {APPS.map(([name, state, icon]) => (
          <button key={name} aria-label={name} className={`mx-[3px] flex h-[50px] w-[49px] flex-col items-center rounded-md pt-2.5 ${state === 'active' ? 'border border-white/10 bg-white/8' : ''}`}>
            <span className="grid h-[29px] place-items-center">{icon}</span>
            {state === 'dot' && <span className="mt-1.5 h-1 w-2 rounded-full bg-[#a99b9b]" />}
            {state === 'active' && <span className="mt-1.5 h-1 w-5 shrink-0 rounded-full bg-[#dba0e6]" />}
          </button>
        ))}
      </div>
      <div className="ml-auto flex items-center pr-[25px] text-[14px] leading-5">
        <button aria-label="Hidden icons"><Svg w={14} h={10}><path d="M1.500 8L7 2.500 12.500 8" strokeWidth="1.800" /></Svg></button>
        <Svg w={22} h={20} className="ml-[22px] text-[#999]"><path d="M5 16a4 4 0 0 1 0-8 6 6 0 0 1 11-1 4.500 4.500 0 0 1 1 9z" fill="#8b8180" stroke="none" /><path d="M2 2l18 17" stroke="#eee" /></Svg>
        <span className="ml-5 flex w-8 flex-col text-center"><span>ENG</span><span>IN</span></span>
        <Svg w={20} h={18} className="ml-5"><path d="M1 7c5-6 13-6 18 0M4 10c3.500-4 8.500-4 12 0M7 13c2-2 4-2 6 0" strokeWidth="1.600" /><circle cx="10" cy="15.500" r="1.500" fill="#fff" stroke="none" /></Svg>
        <Svg w={20} h={18} className="ml-2.5"><path d="M1.500 6.500H5L9.500 2.500v13L5 11.500H1.500zM13 6.500l5 5M18 6.500l-5 5" strokeWidth="1.300" /></Svg>
        <Svg w={21} h={16} className="ml-2.5"><rect x="1" y="2" width="16" height="11" rx="2.500" strokeWidth="1.500" /><rect x="3.500" y="4.500" width="4.500" height="6" fill="#fff" stroke="none" /><path d="M19 6v3.500" strokeWidth="2" /></Svg>
        <span className="ml-4 flex w-[72px] flex-col text-right whitespace-nowrap"><span>11:28 AM</span><span>9/25/2023</span></span>
        <span className="ml-2.5 grid size-5 place-items-center rounded-full bg-[#dba6ea] text-[12px] text-black">6</span>
      </div>
    </footer>
  );
}

export default function App() {
  return (
    <div className="flex h-screen min-h-[720px] flex-col overflow-hidden bg-white">
      <TitleBar />
      <MenuBar />
      <Toolbar />
      <div className="flex min-h-0 flex-1">
        <SidePanel />
        <main className={`flex min-w-0 flex-1 flex-col ${TB}`}>
          <RegionTable />
          <div className="mt-[25px] flex min-h-0 flex-1 pl-2.5">
            <BarChart />
            <MapPanel />
          </div>
        </main>
      </div>
      <TabStrip />
      <StatusBar />
      <Taskbar />
    </div>
  );
}
